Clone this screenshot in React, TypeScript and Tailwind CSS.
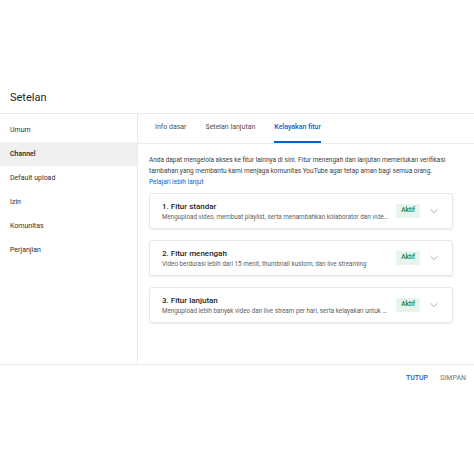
import React from "react";

const sideItems = ["Umum", "Channel", "Default upload", "Izin", "Komunitas", "Perjanjian"];
const tabs = ["Info dasar", "Setelan lanjutan", "Kelayakan fitur"];

const features = [
  {
    title: "1. Fitur standar",
    desc: "Mengupload video, membuat playlist, serta menambahkan kolaborator dan video lainnya ke playlist",
  },
  {
    title: "2. Fitur menengah",
    desc: "Video berdurasi lebih dari 15 menit, thumbnail kustom, dan live streaming",
  },
  {
    title: "3. Fitur lanjutan",
    desc: "Mengupload lebih banyak video dan live stream per hari, serta kelayakan untuk mengajukan banding",
  },
];

function Chevron() {
  return (
    <svg width="10" height="10" viewBox="0 0 24 24" fill="none" stroke="#7a7a7a" strokeWidth="1.5">
      <path d="M4 8l8 8 8-8" />
    </svg>
  );
}

export default function App() {
  return (
    <div
      className="w-[474px] h-[474px] bg-white text-[#282828] overflow-hidden"
      style={{ fontFamily: "Roboto, 'Liberation Sans', sans-serif" }}
    >
      <div className="h-[84px]" />
      <div className="h-[30px] flex items-center px-[10px] border-b border-[#ebebeb]">
        <span className="text-[11px] text-[#1f1f1f]">Setelan</span>
      </div>
      <div className="flex h-[251px] border-b border-[#ebebeb]">
        <div className="w-[138px] shrink-0 border-r border-[#ebebeb] pt-[4px]">
          {sideItems.map((s) => (
            <div
              key={s}
              className={`h-[24px] flex items-center px-[10px] text-[7px] ${
                s === "Channel" ? "bg-[#f0f0f0] text-[#1f1f1f] font-medium" : "text-[#303030]"
              }`}
            >
              {s}
            </div>
          ))}
        </div>
        <div className="flex-1 min-w-0">
          <div className="h-[30px] flex items-stretch pl-[17px] gap-[19px] border-b border-[#ebebeb]">
            {tabs.map((t) => (
              <div
                key={t}
                className={`flex items-center text-[7px] border-b-2 ${
                  t === "Kelayakan fitur"
                    ? "border-[#065fd4] text-[#065fd4] font-medium"
                    : "border-transparent text-[#505050]"
                }`}
              >
                {t}
              </div>
            ))}
          </div>
          <div className="pl-[11px] pr-[21px] pt-[11px]">
            <p className="text-[6.5px] leading-[11px] text-[#404040]">
              Anda dapat mengelola akses ke fitur lainnya di sini. Fitur menengah dan lanjutan memerlukan verifikasi
              tambahan yang membantu kami menjaga komunitas YouTube agar tetap aman bagi semua orang.
              <br />
              <span className="text-[#065fd4]">Pelajari lebih lanjut</span>
            </p>
            <div className="mt-[5px] flex flex-col gap-[11px]">
              {features.map((f) => (
                <div
                  key={f.title}
                  className="h-[36px] rounded-[3px] border border-[#e6e6e6] shadow-[0_1px_2px_rgba(0,0,0,0.07)] flex items-center pl-[12px] pr-[13px]"
                >
                  <div className="flex-1 min-w-0 pr-[8px]">
                    <div className="text-[8px] font-medium leading-[11px] text-[#1f1f1f]">{f.title}</div>
                    <div className="text-[6.3px] leading-[10px] text-[#606060] truncate">{f.desc}</div>
                  </div>
                  <div className="h-[14px] px-[5px] flex items-center bg-[#e6f4ea] text-[#188038] text-[6.5px] font-medium rounded-[1px]">
                    Aktif
                  </div>
                  <div className="ml-[9px]">
                    <Chevron />
                  </div>
                </div>
              ))}
            </div>
          </div>
        </div>
      </div>
      <div className="h-[26px] flex items-center justify-end pr-[8px] gap-[12px] text-[7px] font-medium uppercase">
        <span className="text-[#065fd4]">Tutup</span>
        <span className="text-[#909090]">Simpan</span>
      </div>
    </div>
  );
}
